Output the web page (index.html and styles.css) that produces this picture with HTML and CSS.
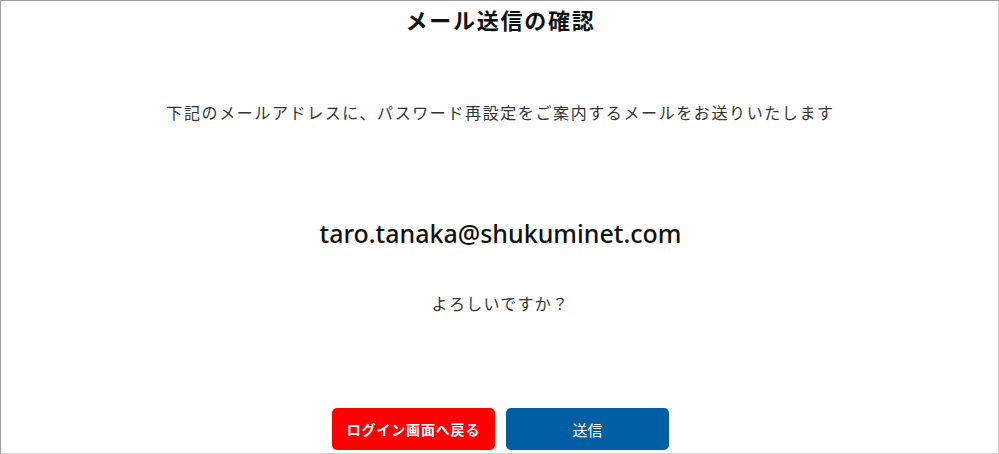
FILE: index.html
```html
<!DOCTYPE html>
<html lang="ja">

<head>
    <meta charset="UTF-8">
    <meta name="viewport" content="width=device-width, initial-scale=1.0">
    <title>メール送信の確認</title>
    <link rel="stylesheet" href="styles.css">
</head>

<body>
    <div class="frame">
        <h1 class="title">メール送信の確認</h1>
        <p class="lead">下記のメールアドレスに、パスワード再設定をご案内するメールをお送りいたします</p>
        <p class="mail">taro.tanaka@shukuminet.com</p>
        <p class="ask">よろしいですか？</p>
        <div class="btns">
            <button class="btn btn-back">ログイン画面へ戻る</button>
            <button class="btn btn-send">送信</button>
        </div>
    </div>
</body>

</html>
```

FILE: styles.css
```css
body {
    margin: 0;
    font-family: "Noto Sans CJK JP", "Noto Sans", sans-serif;
}

.frame {
    width: 999px;
    height: 454px;
    box-sizing: border-box;
    padding-left: 2px;
    border: 1px solid;
    border-color: #a0a0a0 #d4d4d4 #d4d4d4 #a0a0a0;
    overflow: hidden;

    display: flex;
    flex-direction: column;
    align-items: center;
}

.title {
    margin: 2px 0 0;
    font-size: 22px;
    line-height: 33px;
    font-weight: 700;
    letter-spacing: 0.08em;
    color: #111;
}

.lead {
    margin: 64px 0 0;
    font-size: 16px;
    line-height: 24px;
    letter-spacing: 0.1em;
    color: #333;
}

.mail {
    margin: 91px 0 0;
    font-family: "Noto Sans", sans-serif;
    font-size: 25px;
    line-height: 36px;
    font-weight: 500;
    color: #111;
}

.ask {
    margin: 40px 0 0;
    font-size: 16px;
    line-height: 24px;
    letter-spacing: 0.08em;
    color: #333;
}

.btns {
    margin-top: 93px;
    display: flex;
    gap: 11px;
}

.btn {
    width: 163px;
    height: 42px;
    border: none;
    outline: none;
    border-radius: 5px;
    color: #fff;
    font-family: "Noto Sans CJK JP", sans-serif;
    cursor: pointer;
}

.btn-back {
    background-color: #ff0000;
    font-size: 14px;
    font-weight: 700;
    letter-spacing: 0.06em;
}

.btn-send {
    background-color: #005ea5;
    font-size: 15px;
}
```
